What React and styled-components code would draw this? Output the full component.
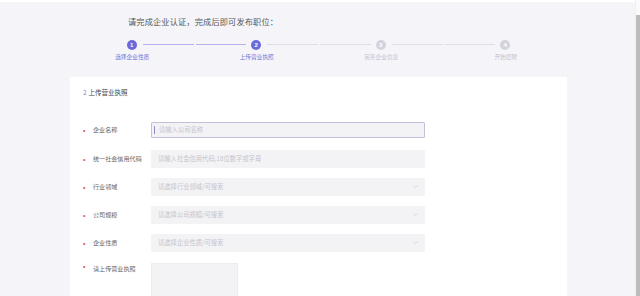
import React from 'react'
import styled, { createGlobalStyle } from 'styled-components'

const Global = createGlobalStyle`
  html, body { margin: 0; padding: 0; }
  body {
    width: 640px;
    height: 296px;
    overflow: hidden;
    font-family: "Noto Sans CJK SC", "Noto Sans", sans-serif;
    background: #f5f5f9;
  }
`

const Page = styled.div`
  display: flex;
  width: 640px;
  height: 296px;
  overflow: hidden;
`

const Main = styled.main`
  flex: 1;
  border-top: 2px solid #fff;
  background: #f5f5f9;
  display: flex;
  flex-direction: column;
  padding-left: 70px;
`

const Scrollbar = styled.div`
  width: 4px;
  background: #fafafa;
  border-left: 1px solid #f0f0f0;
  padding-top: 15px;
  display: flex;
`

const Thumb = styled.div`
  flex: 1;
  background: #bdbdbd;
`

const Title = styled.h2`
  margin: 13px 0 0 58px;
  font-size: 8.2px;
  letter-spacing: 0.15px;
  font-weight: 400;
  line-height: 12px;
  color: #555;
`

const Steps = styled.div`
  display: grid;
  grid-template-columns: repeat(4, 124.5px);
  margin-top: 12px;
`

const Step = styled.div`
  display: flex;
  flex-direction: column;
  align-items: center;
`

const Track = styled.div`
  width: 100%;
  display: flex;
  align-items: center;
  height: 11px;
`

const Line = styled.span`
  flex: 1;
  height: 1px;
  margin: ${({ $side }) => ($side === 'left' ? '0 5px 0 1px' : '0 1px 0 6px')};
  background: ${({ $on, $hide }) => ($hide ? 'transparent' : $on ? '#b4b3ec' : '#dedee6')};
`

const Dot = styled.span`
  width: 10px;
  height: 10px;
  border-radius: 50%;
  background: ${({ $on }) => ($on ? '#6a6ad8' : '#d3d3dd')};
  color: #fff;
  font-family: "Liberation Sans", sans-serif;
  font-size: 6px;
  font-weight: 700;
  display: flex;
  align-items: center;
  justify-content: center;
`

const StepLabel = styled.span`
  margin-top: 3px;
  font-size: 5.7px;
  line-height: 8px;
  color: ${({ $on }) => ($on ? '#7474d4' : '#c2c2cc')};
`

const Card = styled.section`
  margin-top: 16px;
  width: 497px;
  flex: 1;
  background: #fff;
  padding: 11px 0 0 13px;
  box-sizing: border-box;
`

const Heading = styled.div`
  font-size: 6.5px;
  line-height: 9px;
  color: #444;
  margin-bottom: 24px;

  b {
    font-weight: 400;
    color: #8a8ac8;
    margin-right: 2px;
  }
`

const Row = styled.div`
  display: flex;
  align-items: ${({ $top }) => ($top ? 'flex-start' : 'center')};
  height: ${({ $top }) => ($top ? 'auto' : '17px')};
  margin-bottom: ${({ $gap }) => $gap}px;
`

const Star = styled.span`
  width: 10px;
  color: #e05555;
  font-size: 7px;
  line-height: 7px;
  font-family: "Liberation Sans", sans-serif;
  padding-top: ${({ $top }) => ($top ? '0' : '2px')};
`

const Label = styled.span`
  width: 58px;
  font-size: 6.1px;
  line-height: 9px;
  color: #666;
  padding-top: ${({ $top }) => ($top ? '1px' : '0')};
`

const Field = styled.div`
  width: 274px;
  height: ${({ $focus }) => ($focus ? '16px' : '18px')};
  box-sizing: border-box;
  background: ${({ $focus }) => ($focus ? '#f3f2f5' : '#f3f3f6')};
  border: 1px solid ${({ $focus }) => ($focus ? '#c2c1da' : '#f3f3f6')};
  border-radius: 1px;
  display: flex;
  align-items: center;
  padding: 0 6px 0 ${({ $focus }) => ($focus ? '2px' : '6px')};
`

const Caret = styled.span`
  width: 1px;
  height: 8px;
  background: #8d8cc4;
  margin-right: 4px;
`

const Placeholder = styled.span`
  flex: 1;
  font-size: 6.3px;
  color: #c4c4cc;
  white-space: nowrap;
`

const Upload = styled.div`
  width: 87px;
  height: 40px;
  background: #f3f3f6;
  border: 1px solid #ededf0;
  box-sizing: border-box;
`

const Chevron = () => (
  <svg width="5" height="3" viewBox="0 0 5 3">
    <polyline points="0.5,0.5 2.5,2.5 4.5,0.5" fill="none" stroke="#cfcfd6" strokeWidth="0.8" />
  </svg>
)

const steps = ['选择企业性质', '上传营业执照', '完善企业信息', '开始招聘']

const fields = [
  { label: '企业名称', ph: '请输入公司名称', focus: true, gap: 12 },
  { label: '统一社会信用代码', ph: '请输入社会信用代码,18位数字或字母', gap: 11 },
  { label: '行业领域', ph: '请选择行业领域/可搜索', select: true, gap: 11 },
  { label: '公司规模', ph: '请选择公司规模/可搜索', select: true, gap: 11 },
  { label: '企业性质', ph: '请选择企业性质/可搜索', select: true, gap: 12 },
]

export default function App() {
  return (
    <>
      <Global />
      <Page>
        <Main>
          <Title>请完成企业认证，完成后即可发布职位：</Title>
          <Steps>
            {steps.map((s, i) => (
              <Step key={s}>
                <Track>
                  <Line $side="left" $hide={i === 0} $on={i <= 1} />
                  <Dot $on={i <= 1}>{i + 1}</Dot>
                  <Line $side="right" $hide={i === 3} $on={i < 1} />
                </Track>
                <StepLabel $on={i <= 1}>{s}</StepLabel>
              </Step>
            ))}
          </Steps>
          <Card>
            <Heading><b>2</b>上传营业执照</Heading>
            {fields.map((f) => (
              <Row key={f.label} $gap={f.gap}>
                <Star>•</Star>
                <Label>{f.label}</Label>
                <Field $focus={f.focus}>
                  {f.focus && <Caret />}
                  <Placeholder>{f.ph}</Placeholder>
                  {f.select && <Chevron />}
                </Field>
              </Row>
            ))}
            <Row $top $gap={0}>
              <Star $top>•</Star>
              <Label $top>请上传营业执照</Label>
              <Upload />
            </Row>
          </Card>
        </Main>
        <Scrollbar>
          <Thumb />
        </Scrollbar>
      </Page>
    </>
  )
}
